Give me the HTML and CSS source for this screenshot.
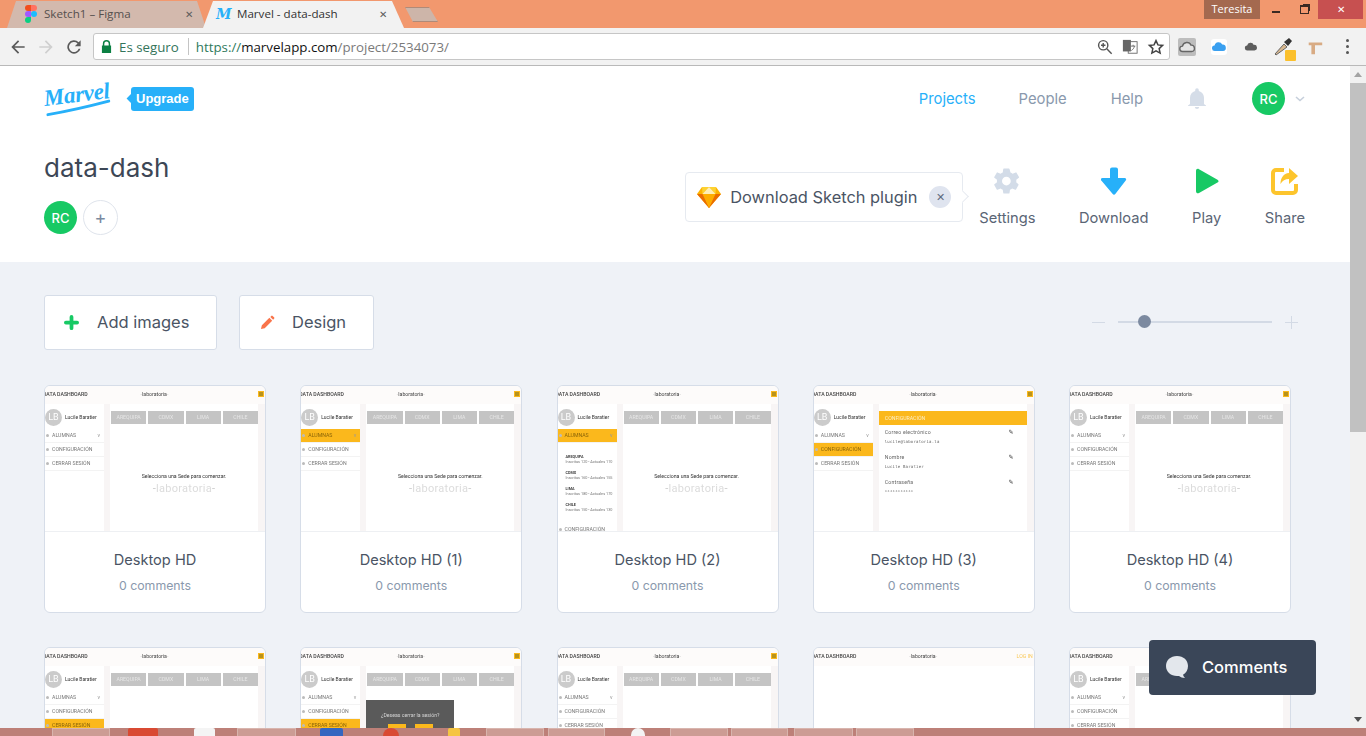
FILE: index.html
```html
<!DOCTYPE html>
<html lang="en">
<head>
  <meta charset="UTF-8">
  <meta name="viewport" content="width=device-width, initial-scale=1.0">
  <title>Marvel - data-dash</title>
  <link rel="stylesheet" href="styles.css">
</head>
<body>

<div class="tabstrip">
  <div class="tab tab-off">
    <svg class="favicon" viewBox="0 0 12 18" width="12" height="18">
      <circle cx="3" cy="3" r="3" fill="#f24e1e"/><rect x="3" width="3" height="6" fill="#f24e1e"/>
      <rect x="6" width="3" height="6" fill="#ff7262"/><circle cx="9" cy="3" r="3" fill="#ff7262"/>
      <circle cx="3" cy="9" r="3" fill="#a259ff"/><rect x="3" y="6" width="3" height="6" fill="#a259ff"/>
      <circle cx="9" cy="9" r="3" fill="#1abcfe"/>
      <circle cx="3" cy="15" r="3" fill="#0acf83"/><rect x="3" y="12" width="3" height="3" fill="#0acf83"/>
    </svg>
    <span class="tab-title">Sketch1 – Figma</span>
    <span class="tab-x">✕</span>
  </div>
  <div class="tab tab-on">
    <span class="favicon-m">M</span>
    <span class="tab-title">Marvel - data-dash</span>
    <span class="tab-x">✕</span>
  </div>
  <div class="newtab"></div>
  <div class="winctl">
    <span class="win-user">Teresita</span>
    <span class="win-btn"><i class="win-min"></i></span>
    <span class="win-btn"><i class="win-max"></i></span>
    <span class="win-close">✕</span>
  </div>
</div>

<div class="toolbar">
  <button class="tb-btn">
    <svg viewBox="0 0 24 24" width="20" height="20"><path d="M20 11H7.8l5.6-5.6L12 4l-8 8 8 8 1.4-1.4L7.8 13H20z" fill="#5a5a5a"/></svg>
  </button>
  <button class="tb-btn">
    <svg viewBox="0 0 24 24" width="20" height="20"><path d="M4 11h12.2l-5.6-5.6L12 4l8 8-8 8-1.4-1.4 5.6-5.6H4z" fill="#cfcfcf"/></svg>
  </button>
  <button class="tb-btn">
    <svg viewBox="0 0 24 24" width="20" height="20"><path d="M17.65 6.35A8 8 0 1 0 19.73 14h-2.08a6 6 0 1 1-1.41-6.24L13 11h7V4z" fill="#5a5a5a"/></svg>
  </button>
  <div class="omnibox">
    <svg class="lock" viewBox="0 0 12 14" width="11" height="13"><path d="M2 6V4a4 4 0 0 1 8 0v2h1v8H1V6zm1.6 0h4.8V4a2.4 2.4 0 0 0-4.8 0z" fill="#0b8043"/></svg>
    <span class="secure">Es seguro</span>
    <span class="omni-sep"></span>
    <span class="url"><span class="url-scheme">https://</span><span class="url-host">marvelapp.com</span>/project/2534073/</span>
    <span class="omni-icons">
      <svg viewBox="0 0 18 18" width="16" height="16"><circle cx="7" cy="7" r="5.2" fill="none" stroke="#555" stroke-width="1.6"/><path d="M11 11l5.5 5.5M4.5 7h5M7 4.500v5" stroke="#555" stroke-width="1.6"/></svg>
      <svg viewBox="0 0 18 18" width="16" height="16"><rect x="7" y="3" width="10" height="13" fill="#fff" stroke="#666"/><rect x="1" y="1" width="9" height="13" fill="#666"/><path d="M10 8h5M12.500 6.500v1.500M14 8c-.5 2.500-2 4-3.500 5" fill="none" stroke="#666"/></svg>
      <svg viewBox="0 0 24 24" width="18" height="18"><path d="M12 3.500l2.600 5.700 6.200.7-4.600 4.200 1.300 6.100L12 17.200l-5.500 3 1.300-6.100-4.600-4.200 6.200-.7z" fill="none" stroke="#444" stroke-width="2"/></svg>
    </span>
  </div>
  <div class="extensions">
    <span class="ext ext-weather">
      <svg viewBox="0 0 20 20" width="18" height="18"><path d="M5 15a3 3 0 0 1 0-6 5 5 0 0 1 9.500-1 3.500 3.500 0 0 1 .5 7z" fill="#e4e4e4" stroke="#666" stroke-width="1.500"/></svg>
    </span>
    <span class="ext ext-icloud">
      <svg viewBox="0 0 20 20" width="16" height="16"><path d="M5 15a3.500 3.500 0 0 1-.5-7A5 5 0 0 1 14 7a4 4 0 0 1 1 8z" fill="#3aa0f0"/></svg>
    </span>
    <span class="ext">
      <svg viewBox="0 0 20 20" width="14" height="14"><path d="M5 15a3.500 3.500 0 0 1-.5-7A5 5 0 0 1 14 7a4 4 0 0 1 1 8z" fill="#5d5d5d"/></svg>
    </span>
    <span class="ext ext-dropper">
      <svg viewBox="0 0 20 20" width="20" height="20"><path d="M3 18l-1-1 9-10 3 3z" fill="#d9b88f" stroke="#666"/><path d="M11 5l5-4 3 3-4 5z" fill="#333"/></svg>
      <i class="ext-badge"></i>
    </span>
    <span class="ext">
      <svg viewBox="0 0 20 20" width="18" height="18"><path d="M3 5h15v3h-8v10H6V8H3z" fill="#d8ab84"/></svg>
    </span>
    <span class="ext ext-dots"><i></i><i></i><i></i></span>
  </div>
</div>

<div class="app">
  <div class="page">
    <header class="topbar">
      <nav class="nav">
        <div class="brand">
          <span class="logo">Marvel
            <svg class="logo-swoosh" viewBox="0 0 66 10" width="66" height="10"><path d="M2 8c20-1 40-3 62-6" fill="none" stroke="#27b0f9" stroke-width="3" stroke-linecap="round"/></svg>
          </span>
          <span class="upgrade">Upgrade</span>
        </div>
        <div class="nav-links">
          <a class="nav-link nav-active">Projects</a>
          <a class="nav-link">People</a>
          <a class="nav-link nav-last">Help</a>
          <svg class="bell" viewBox="0 0 24 24" width="24" height="24"><path d="M12 22a2.200 2.200 0 0 0 2.200-2H9.800a2.200 2.200 0 0 0 2.200 2zm7-5v-6c0-3.500-2-6.200-5.200-7V3a1.800 1.800 0 0 0-3.600 0v1C7 4.800 5 7.500 5 11v6l-2 1.500V19h18v-.5z" fill="#d5dde8"/></svg>
          <span class="avatar">RC</span>
          <svg class="chevron" viewBox="0 0 10 6" width="10" height="6"><path d="M1 1l4 3.500L9 1" fill="none" stroke="#c6cfdb" stroke-width="1.600"/></svg>
        </div>
      </nav>
      <div class="project">
        <div class="project-info">
          <h1 class="project-name">data-dash</h1>
          <div class="members">
            <span class="avatar avatar-sm">RC</span>
            <span class="add-member">+</span>
          </div>
        </div>
        <div class="project-tools">
          <div class="sketch-pop">
            <svg viewBox="0 0 24 22" width="24" height="22">
              <path d="M5 1h14l5 7-12 14L0 8z" fill="#fdb300"/>
              <path d="M0 8h24L12 22z" fill="#ea6c00"/>
              <path d="M5.500 8h13L12 22z" fill="#fdad00"/>
              <path d="M5 1l.5 7L12 1l6.500 7L19 1z" fill="#fdd231"/>
              <path d="M5.500 8L12 1l6.500 7z" fill="#feeeb7"/>
            </svg>
            <span class="sketch-text">Download Sketch plugin</span>
            <span class="sketch-close">✕</span>
          </div>
          <div class="actions">
            <div class="action">
              <svg viewBox="0 0 24 24" width="30" height="30"><path d="M19.400 13a7.500 7.500 0 0 0 0-2l2.100-1.600a.5.5 0 0 0 .1-.6l-2-3.500a.5.5 0 0 0-.6-.2l-2.500 1a7.500 7.500 0 0 0-1.700-1L14 2.400a.5.5 0 0 0-.5-.4h-4a.5.5 0 0 0-.5.4l-.4 2.700a7.500 7.500 0 0 0-1.700 1l-2.500-1a.5.5 0 0 0-.6.2l-2 3.500a.5.5 0 0 0 .1.600L4 11a7.500 7.500 0 0 0 0 2l-2.100 1.600a.5.5 0 0 0-.1.600l2 3.500a.5.5 0 0 0 .6.200l2.500-1a7.500 7.500 0 0 0 1.700 1l.4 2.700a.5.5 0 0 0 .5.4h4a.5.5 0 0 0 .5-.4l.4-2.700a7.500 7.500 0 0 0 1.700-1l2.500 1a.5.5 0 0 0 .6-.2l2-3.500a.5.5 0 0 0-.1-.6zM11.500 15.500a3.500 3.500 0 1 1 0-7 3.500 3.500 0 0 1 0 7z" fill="#d3dce8"/></svg>
              <span>Settings</span>
            </div>
            <div class="action">
              <svg viewBox="0 0 26 28" width="26" height="28"><path d="M9 2.500a2 2 0 0 1 2-2h4a2 2 0 0 1 2 2V11h6.500c1.500 0 2.200 1.500 1.200 2.600L14.500 26.800a2 2 0 0 1-3 0L.3 13.600C-.7 12.500 0 11 1.500 11H9z" fill="#27b0f9"/></svg>
              <span>Download</span>
            </div>
            <div class="action">
              <svg viewBox="0 0 24 26" width="24" height="26"><path d="M1 3c0-2 1.500-2.800 3-1.800l18.500 10.500c1.400.8 1.400 2 0 2.800L4 25c-1.500.8-3 0-3-2z" fill="#17c964"/></svg>
              <span>Play</span>
            </div>
            <div class="action">
              <svg viewBox="0 0 28 28" width="28" height="28"><path d="M13 3H5a3 3 0 0 0-3 3v17a3 3 0 0 0 3 3h17a3 3 0 0 0 3-3v-6" fill="none" stroke="#fdc52d" stroke-width="4"/><path d="M18 1l9 8-9 8v-5c-4 0-6.500 1.500-8.500 5 0-6 3-10.500 8.500-11z" fill="#fdc52d"/></svg>
              <span>Share</span>
            </div>
          </div>
        </div>
      </div>
    </header>

    <section class="content">
      <div class="content-bar">
        <div class="content-btns">
          <button class="big-btn btn-add">
            <svg viewBox="0 0 16 16" width="15" height="15"><path d="M6 2a2 2 0 0 1 4 0v4h4a2 2 0 0 1 0 4h-4v4a2 2 0 0 1-4 0v-4H2a2 2 0 0 1 0-4h4z" fill="#17c964"/></svg>
            Add images
          </button>
          <button class="big-btn btn-design">
            <svg viewBox="0 0 16 16" width="15" height="15"><path d="M1 15l1-4 8-8 3 3-8 8zM11 2l1-1a1 1 0 0 1 1.500 0l1.500 1.500a1 1 0 0 1 0 1.500l-1 1z" fill="#f9744b"/></svg>
            Design
          </button>
        </div>
        <div class="zoom-slider">
          <i class="zoom-minus"></i>
          <div class="zoom-track"><i class="zoom-knob"></i></div>
          <i class="zoom-plus"></i>
        </div>
      </div>

      <div class="grid">

        <article class="card">
          <div class="shot">
            <div class="shot-head"><span>DATA DASHBOARD</span><b>laboratoria</b><i></i></div>
            <div class="shot-body">
              <div class="shot-side">
                <div class="shot-user"><span class="shot-lb">LB</span><span>Lucile Baratier</span></div>
                <div class="shot-item shot-drop">ALUMNAS</div>
                <div class="shot-item">CONFIGURACIÓN</div>
                <div class="shot-item">CERRAR SESIÓN</div>
              </div>
              <div class="shot-main">
                <div class="shot-tabs"><span>AREQUIPA</span><span>CDMX</span><span>LIMA</span><span>CHILE</span></div>
                <p class="shot-msg">Selecciona una Sede para comenzar.</p>
                <p class="shot-brand">laboratoria</p>
              </div>
            </div>
          </div>
          <div class="card-foot"><h3>Desktop HD</h3><p>0 comments</p></div>
        </article>

        <article class="card">
          <div class="shot">
            <div class="shot-head"><span>DATA DASHBOARD</span><b>laboratoria</b><i></i></div>
            <div class="shot-body">
              <div class="shot-side">
                <div class="shot-user"><span class="shot-lb">LB</span><span>Lucile Baratier</span></div>
                <div class="shot-item shot-drop shot-hot">ALUMNAS</div>
                <div class="shot-item">CONFIGURACIÓN</div>
                <div class="shot-item">CERRAR SESIÓN</div>
              </div>
              <div class="shot-main">
                <div class="shot-tabs"><span>AREQUIPA</span><span>CDMX</span><span>LIMA</span><span>CHILE</span></div>
                <p class="shot-msg">Selecciona una Sede para comenzar.</p>
                <p class="shot-brand">laboratoria</p>
              </div>
            </div>
          </div>
          <div class="card-foot"><h3>Desktop HD (1)</h3><p>0 comments</p></div>
        </article>

        <article class="card">
          <div class="shot">
            <div class="shot-head"><span>DATA DASHBOARD</span><b>laboratoria</b><i></i></div>
            <div class="shot-body">
              <div class="shot-side">
                <div class="shot-user"><span class="shot-lb">LB</span><span>Lucile Baratier</span></div>
                <div class="shot-item shot-drop shot-hot">ALUMNAS</div>
                <div class="shot-sedes">
                  <div><b>AREQUIPA</b>Inscritas 120 - Actuales 110</div>
                  <div><b>CDMX</b>Inscritas 160 - Actuales 155</div>
                  <div><b>LIMA</b>Inscritas 180 - Actuales 170</div>
                  <div><b>CHILE</b>Inscritas 150 - Actuales 130</div>
                </div>
                <div class="shot-item">CONFIGURACIÓN</div>
              </div>
              <div class="shot-main">
                <div class="shot-tabs"><span>AREQUIPA</span><span>CDMX</span><span>LIMA</span><span>CHILE</span></div>
                <p class="shot-msg">Selecciona una Sede para comenzar.</p>
                <p class="shot-brand">laboratoria</p>
              </div>
            </div>
          </div>
          <div class="card-foot"><h3>Desktop HD (2)</h3><p>0 comments</p></div>
        </article>

        <article class="card">
          <div class="shot">
            <div class="shot-head"><span>DATA DASHBOARD</span><b>laboratoria</b><i></i></div>
            <div class="shot-body">
              <div class="shot-side">
                <div class="shot-user"><span class="shot-lb">LB</span><span>Lucile Baratier</span></div>
                <div class="shot-item shot-drop">ALUMNAS</div>
                <div class="shot-item shot-hot">CONFIGURACIÓN</div>
                <div class="shot-item">CERRAR SESIÓN</div>
              </div>
              <div class="shot-main">
                <div class="shot-conf-title">CONFIGURACIÓN</div>
                <div class="shot-field"><span>Correo electrónico</span><code>lucile@laboratoria.la</code></div>
                <div class="shot-field"><span>Nombre</span><code>Lucile Baratier</code></div>
                <div class="shot-field"><span>Contraseña</span><code>***********</code></div>
              </div>
            </div>
          </div>
          <div class="card-foot"><h3>Desktop HD (3)</h3><p>0 comments</p></div>
        </article>

        <article class="card">
          <div class="shot">
            <div class="shot-head"><span>DATA DASHBOARD</span><b>laboratoria</b><i></i></div>
            <div class="shot-body">
              <div class="shot-side">
                <div class="shot-user"><span class="shot-lb">LB</span><span>Lucile Baratier</span></div>
                <div class="shot-item shot-drop">ALUMNAS</div>
                <div class="shot-item">CONFIGURACIÓN</div>
                <div class="shot-item">CERRAR SESIÓN</div>
              </div>
              <div class="shot-main">
                <div class="shot-tabs"><span>AREQUIPA</span><span>CDMX</span><span>LIMA</span><span>CHILE</span></div>
                <p class="shot-msg">Selecciona una Sede para comenzar.</p>
                <p class="shot-brand">laboratoria</p>
              </div>
            </div>
          </div>
          <div class="card-foot"><h3>Desktop HD (4)</h3><p>0 comments</p></div>
        </article>

        <article class="card">
          <div class="shot">
            <div class="shot-head"><span>DATA DASHBOARD</span><b>laboratoria</b><i></i></div>
            <div class="shot-body">
              <div class="shot-side">
                <div class="shot-user"><span class="shot-lb">LB</span><span>Lucile Baratier</span></div>
                <div class="shot-item shot-drop">ALUMNAS</div>
                <div class="shot-item">CONFIGURACIÓN</div>
                <div class="shot-item shot-hot">CERRAR SESIÓN</div>
              </div>
              <div class="shot-main">
                <div class="shot-tabs"><span>AREQUIPA</span><span>CDMX</span><span>LIMA</span><span>CHILE</span></div>
              </div>
            </div>
          </div>
          <div class="card-foot"><h3>Desktop HD (5)</h3><p>0 comments</p></div>
        </article>

        <article class="card">
          <div class="shot">
            <div class="shot-head"><span>DATA DASHBOARD</span><b>laboratoria</b><i></i></div>
            <div class="shot-body">
              <div class="shot-side">
                <div class="shot-user"><span class="shot-lb">LB</span><span>Lucile Baratier</span></div>
                <div class="shot-item shot-drop">ALUMNAS</div>
                <div class="shot-item">CONFIGURACIÓN</div>
                <div class="shot-item shot-hot">CERRAR SESIÓN</div>
              </div>
              <div class="shot-main">
                <div class="shot-tabs"><span>AREQUIPA</span><span>CDMX</span><span>LIMA</span><span>CHILE</span></div>
                <div class="shot-dialog">
                  ¿Deseas cerrar la sesión?
                  <div class="shot-dialog-btns"><i></i><i></i></div>
                </div>
              </div>
            </div>
          </div>
          <div class="card-foot"><h3>Desktop HD (6)</h3><p>0 comments</p></div>
        </article>

        <article class="card">
          <div class="shot">
            <div class="shot-head"><span>DATA DASHBOARD</span><b>laboratoria</b><i></i></div>
            <div class="shot-body">
              <div class="shot-side">
                <div class="shot-user"><span class="shot-lb">LB</span><span>Lucile Baratier</span></div>
                <div class="shot-item shot-drop">ALUMNAS</div>
                <div class="shot-item">CONFIGURACIÓN</div>
                <div class="shot-item">CERRAR SESIÓN</div>
              </div>
              <div class="shot-main">
                <div class="shot-tabs"><span>AREQUIPA</span><span>CDMX</span><span>LIMA</span><span>CHILE</span></div>
              </div>
            </div>
          </div>
          <div class="card-foot"><h3>Desktop HD (7)</h3><p>0 comments</p></div>
        </article>

        <article class="card">
          <div class="shot shot-blank">
            <div class="shot-head"><span>DATA DASHBOARD</span><b>laboratoria</b><em>LOG IN</em></div>
          </div>
          <div class="card-foot"><h3>Desktop HD (8)</h3><p>0 comments</p></div>
        </article>

        <article class="card">
          <div class="shot">
            <div class="shot-head"><span>DATA DASHBOARD</span><b>laboratoria</b><i></i></div>
            <div class="shot-body">
              <div class="shot-side">
                <div class="shot-user"><span class="shot-lb">LB</span><span>Lucile Baratier</span></div>
                <div class="shot-item shot-drop">ALUMNAS</div>
                <div class="shot-item">CONFIGURACIÓN</div>
                <div class="shot-item">CERRAR SESIÓN</div>
              </div>
              <div class="shot-main">
                <div class="shot-tabs"><span>AREQUIPA</span><span>CDMX</span><span>LIMA</span><span>CHILE</span></div>
              </div>
            </div>
          </div>
          <div class="card-foot"><h3>Desktop HD (9)</h3><p>0 comments</p></div>
        </article>

      </div>
    </section>
  </div>

  <div class="scrollbar">
    <span class="sb-up"></span>
    <span class="sb-thumb"></span>
    <span class="sb-down"></span>
  </div>

  <button class="comments-fab">
    <svg viewBox="0 0 24 24" width="24" height="24"><path d="M12 1c6.500 0 11 4.300 11 10 0 4-2 7-5 8.800.3 1.200 1 2.200 2 3.200-2.500 0-4.500-.8-6-2-.7.100-1.300.1-2 0C6 21 1 17 1 11 1 5.300 5.500 1 12 1z" fill="#e3e7ec"/></svg>
    Comments
  </button>
</div>

<div class="taskbar">
  <span class="task task-a"></span>
  <span class="mark mark-red mark-b"></span>
  <span class="mark mark-white mark-c"></span>
  <span class="task task-d"></span>
  <span class="mark mark-blue mark-e"></span>
  <span class="mark mark-red mark-f"></span>
  <span class="mark mark-gold mark-g"></span>
  <span class="task task-h"></span>
  <span class="task task-i"></span>
  <span class="mark mark-white mark-j"></span>
  <span class="task task-k"></span>
  <span class="task task-l"></span>
  <span class="task task-m"></span>
  <span class="task task-n"></span>
</div>

</body>
</html>
```

FILE: styles.css
```css
* {
  box-sizing: border-box;
}

html, body {
  margin: 0;
  height: 100%;
}

body {
  display: flex;
  flex-direction: column;
  height: 736px;
  overflow: hidden;
  font-family: Inter, "Liberation Sans", sans-serif;
  background: #fff;
}

button {
  font-family: inherit;
  padding: 0;
  border: 0;
  background: none;
}

/* browser tab strip */
.tabstrip {
  display: flex;
  flex: 0 0 28px;
  align-items: flex-end;
  padding-left: 7px;
  background: #f2986e;
  font-family: "Open Sans", sans-serif;
  font-size: 11.600px;
}

.tab {
  display: flex;
  align-items: center;
  width: 199px;
  height: 27px;
  padding: 0 13px 2px 18px;
  clip-path: polygon(0 100%, 9px 0, 190px 0, 199px 100%);
}

.tab-off {
  background: #d3b9ad;
  color: #55504d;
}

.tab-on {
  margin-left: -3px;
  width: 201px;
  padding-left: 13px;
  padding-right: 17px;
  background: #f2f2f2;
  color: #333;
  clip-path: polygon(0 100%, 10px 0, 189px 0, 201px 100%);
}

.favicon {
  flex: none;
  margin-right: 7px;
}

.favicon-m {
  width: 17px;
  margin-right: 4px;
  color: #27b0f9;
  font-family: "DejaVu Serif", serif;
  font-size: 14px;
  font-style: italic;
  font-weight: 700;
}

.tab-title {
  flex: 1;
}

.tab-x {
  color: #5c5c5c;
  font-size: 10px;
}

.newtab {
  width: 33px;
  height: 15px;
  margin: 0 0 6px 1px;
  background: #cdb5a9;
  border: 1px solid #b08a78;
  clip-path: polygon(0 0, 24px 0, 33px 100%, 8px 100%);
}

.winctl {
  display: flex;
  align-self: flex-start;
  align-items: center;
  height: 19px;
  margin-left: auto;
  padding-right: 3px;
}

.win-user {
  width: 56px;
  height: 19px;
  margin-right: 2px;
  background: #a4694f;
  color: #fff;
  font-size: 11px;
  line-height: 18px;
  text-align: center;
}

.win-btn {
  display: flex;
  align-items: center;
  justify-content: center;
  width: 28px;
  height: 19px;
}

.win-min {
  width: 8px;
  height: 2px;
  margin-top: 4px;
  background: #3a2a22;
}

.win-max {
  width: 9px;
  height: 9px;
  border: 1px solid #3a2a22;
  border-top-width: 2px;
  box-shadow: 2px -2px 0 -1px #3a2a22;
}

.win-close {
  width: 45px;
  height: 19px;
  background: #c75050;
  color: #fff;
  font-size: 10px;
  line-height: 19px;
  text-align: center;
}

/* browser toolbar */
.toolbar {
  display: flex;
  flex: 0 0 38px;
  align-items: center;
  padding-left: 4px;
  background: #f2f2f2;
  border-bottom: 1px solid #b9b9b9;
}

.tb-btn {
  display: flex;
  align-items: center;
  justify-content: center;
  width: 28px;
  height: 28px;
}

.omnibox {
  display: flex;
  align-items: center;
  width: 1077px;
  height: 27px;
  margin-left: 5px;
  padding: 0 4px 0 7px;
  background: #fff;
  border: 1px solid #c6c6c6;
  border-radius: 3px;
  font-family: "Open Sans", sans-serif;
  font-size: 13.300px;
}

.lock {
  margin: 0 7px 0 0;
}

.secure {
  color: #33745a;
}

.omni-sep {
  width: 1px;
  height: 17px;
  margin: 0 7px 0 9px;
  background: #c4c4c4;
}

.url {
  flex: 1;
  color: #7a7a7a;
}

.url-scheme {
  color: #2f7a5c;
}

.url-host {
  color: #111;
}

.omni-icons {
  display: flex;
  align-items: center;
  gap: 9px;
}

.extensions {
  display: flex;
  gap: 8px;
  margin-left: 5px;
}

.ext {
  position: relative;
  display: flex;
  align-items: center;
  justify-content: center;
  width: 24px;
  height: 24px;
}

.ext-weather svg {
  background: #bdbdbd;
  border-radius: 2px;
}

.ext-icloud svg {
  background: #fff;
  border-radius: 3px;
}

.ext-badge {
  position: absolute;
  right: -1px;
  bottom: -2px;
  width: 11px;
  height: 11px;
  background: #fbc02d;
  border-radius: 1px;
}

.ext-dots {
  flex-direction: column;
  gap: 3px;
}

.ext-dots i {
  width: 3px;
  height: 3px;
  background: #555;
  border-radius: 50%;
}

/* app area */
.app {
  position: relative;
  display: flex;
  flex: 1;
  min-height: 0;
}

.page {
  flex: 1;
  min-width: 0;
  overflow: hidden;
  background: #eff2f7;
}

.topbar {
  height: 196px;
  padding: 0 45px 0 44px;
  background: #fff;
}

.nav {
  display: flex;
  align-items: center;
  justify-content: space-between;
  height: 65px;
}

.brand {
  display: flex;
  align-items: center;
}

.logo {
  position: relative;
  display: block;
  width: 87px;
  color: #27b0f9;
  font-family: "Liberation Serif", serif;
  font-size: 23px;
  font-style: italic;
  font-weight: 700;
  letter-spacing: -.3px;
  line-height: 24px;
  transform: rotate(-7deg);
  transform-origin: 0 50%;
}

.logo-swoosh {
  position: absolute;
  top: 20px;
  left: 0;
}

.upgrade {
  position: relative;
  height: 24px;
  padding: 0 5px;
  background: #27b0f9;
  border-radius: 3px;
  color: #fff;
  font-family: "Liberation Sans", sans-serif;
  font-size: 13px;
  font-weight: 700;
  line-height: 24px;
}

.upgrade::before {
  content: "";
  position: absolute;
  top: 8px;
  left: -3px;
  width: 7px;
  height: 7px;
  background: #27b0f9;
  transform: rotate(45deg);
}

.nav-links {
  display: flex;
  align-items: center;
  font-size: 14.800px;
}

.nav-link {
  margin-right: 44px;
  color: #8a99ad;
}

.nav-active {
  margin-right: 43px;
  color: #27b0f9;
}

.nav-last {
  margin-right: 42px;
}

.bell {
  margin: 0 43px 0 0;
}

.avatar {
  display: flex;
  align-items: center;
  justify-content: center;
  width: 33px;
  height: 33px;
  background: #17c964;
  border-radius: 50%;
  color: #fff;
  font-size: 13px;
  font-weight: 500;
}

.chevron {
  margin-left: 10px;
}

.project {
  display: flex;
  justify-content: space-between;
}

.project-name {
  margin: 20px 0 15px;
  color: #3d4756;
  font-size: 26px;
  font-weight: 400;
  line-height: 34px;
}

.members {
  display: flex;
  align-items: center;
  gap: 6px;
}

.add-member {
  display: flex;
  align-items: center;
  justify-content: center;
  width: 35px;
  height: 35px;
  border: 1px solid #dfe4ec;
  border-radius: 50%;
  color: #7b8aa0;
  font-size: 18px;
}

.project-tools {
  display: flex;
  align-items: flex-start;
}

.sketch-pop {
  position: relative;
  display: flex;
  align-items: center;
  width: 278px;
  height: 50px;
  margin-top: 41px;
  margin-right: 16px;
  padding: 0 11px 0 11px;
  background: #fff;
  border: 1px solid #e6eaf0;
  border-radius: 4px;
}

.sketch-pop::after {
  content: "";
  position: absolute;
  top: 19px;
  right: -5px;
  width: 8px;
  height: 8px;
  background: #fff;
  border-top: 1px solid #e6eaf0;
  border-right: 1px solid #e6eaf0;
  transform: rotate(45deg);
}

.sketch-text {
  flex: 1;
  margin-left: 9px;
  color: #4a5464;
  font-size: 16.400px;
}

.sketch-close {
  display: flex;
  align-items: center;
  justify-content: center;
  width: 22px;
  height: 22px;
  background: #dfe4ef;
  border-radius: 50%;
  color: #5d6b80;
  font-size: 11px;
}

.actions {
  display: flex;
  gap: 43.500px;
  margin-top: 35px;
}

.action {
  display: flex;
  flex-direction: column;
  align-items: center;
  color: #5a6575;
  font-size: 14.700px;
}

.action svg {
  height: 30px;
  margin-bottom: 13px;
}

/* images */
.content {
  padding: 33px 0 0 44px;
}

.content-bar {
  display: flex;
  align-items: center;
  justify-content: space-between;
  height: 55px;
  padding-right: 52px;
}

.content-btns {
  display: flex;
  gap: 22px;
}

.big-btn {
  display: flex;
  align-items: center;
  height: 55px;
  padding-bottom: 1px;
  background: #fff;
  border: 1px solid #d6dde8;
  border-radius: 3px;
  color: #4a5464;
  font-size: 16.500px;
}

.btn-add {
  width: 173px;
  padding-left: 19px;
  gap: 18px;
}

.btn-design {
  width: 135px;
  padding-left: 20px;
  gap: 17px;
}

.zoom-slider {
  display: flex;
  align-items: center;
  gap: 13px;
  margin-top: -1px;
}

.zoom-minus {
  width: 13px;
  height: 1px;
  background: #d3dae5;
}

.zoom-plus {
  position: relative;
  width: 13px;
  height: 1px;
  background: #d3dae5;
}

.zoom-plus::after {
  content: "";
  position: absolute;
  top: -6px;
  left: 6px;
  width: 1px;
  height: 13px;
  background: #d3dae5;
}

.zoom-track {
  position: relative;
  width: 154px;
  height: 2px;
  background: #d3dae5;
}

.zoom-knob {
  position: absolute;
  top: -6px;
  left: 20px;
  width: 13px;
  height: 13px;
  background: #7c8aa0;
  border-radius: 50%;
}

.grid {
  display: grid;
  grid-template-columns: repeat(5, 222px);
  column-gap: 34.250px;
  row-gap: 34px;
  margin-top: 35px;
}

.card {
  height: 228px;
  overflow: hidden;
  background: #fff;
  border: 1px solid #d6dde8;
  border-radius: 6px;
}

.card-foot {
  padding-top: 18px;
  text-align: center;
}

.card-foot h3 {
  margin: 0;
  color: #4a5464;
  font-size: 14.600px;
  font-weight: 400;
  line-height: 20px;
}

.card-foot p {
  margin: 7px 0 0;
  color: #8a99ad;
  font-size: 12.300px;
  line-height: 18px;
}

/* screenshot miniature inside a card */
.shot {
  display: flex;
  flex-direction: column;
  height: 146px;
  overflow: hidden;
  background: #f8f5f5;
  border-bottom: 1px solid #eef0f3;
  color: #444;
  font-family: Roboto, sans-serif;
  font-size: 5.200px;
  filter: blur(.3px);
}

.shot-blank {
  background: #fff;
}

.shot-head {
  display: grid;
  flex: 0 0 18px;
  grid-template-columns: 1fr auto 1fr;
  align-items: center;
  padding: 0 1px 3px 0;
  background: #fdfbfa;
}

.shot-head span {
  margin-left: -2px;
  font-weight: 500;
}

.shot-head b {
  font-weight: 400;
}

.shot-head b::before,
.shot-head b::after,
.shot-brand::before,
.shot-brand::after {
  content: "-";
  color: #ccc;
}

.shot-head i {
  justify-self: end;
  width: 6px;
  height: 6px;
  margin-top: 1px;
  background: #b8931d;
  border: 1px solid #fbb81c;
}

.shot-head em {
  justify-self: end;
  color: #f9c95a;
  font-style: normal;
}

.shot-body {
  display: flex;
  flex: 1;
  min-height: 0;
}

.shot-side {
  flex: 0 0 59px;
  background: #fff;
  color: #777;
}

.shot-user {
  display: flex;
  align-items: center;
  gap: 3px;
  height: 25px;
  padding-top: 1px;
  color: #333;
  font-size: 5px;
}

.shot-lb {
  display: flex;
  align-items: center;
  justify-content: center;
  width: 17px;
  height: 17px;
  background: #cbcbcb;
  border-radius: 50%;
  color: #fff;
  font-size: 9px;
}

.shot-item {
  position: relative;
  height: 14px;
  padding-left: 7px;
  border-bottom: 1px solid #f3f3f3;
  line-height: 13px;
  white-space: nowrap;
}

.shot-item::before {
  content: "";
  position: absolute;
  top: 5px;
  left: 1px;
  width: 3px;
  height: 3px;
  background: #bbb;
  border-radius: 50%;
}

.shot-drop::after {
  content: "v";
  position: absolute;
  top: 0;
  right: 4px;
  color: #999;
}

.shot-hot {
  background: #fbb81c;
  color: #8a6408;
}

.shot-sedes {
  height: 80px;
  padding: 11px 0 0 8px;
  font-size: 3.800px;
  color: #777;
}

.shot-sedes div {
  height: 16px;
  white-space: nowrap;
}

.shot-sedes b {
  display: block;
  color: #444;
}

.shot-main {
  position: relative;
  flex: 1;
  height: 100%;
  margin: 0 7px 0 6px;
  padding-top: 7px;
  background: #fff;
  text-align: center;
}

.shot-tabs {
  display: grid;
  grid-template-columns: repeat(4, 1fr);
  gap: 2px;
  margin-left: 1px;
}

.shot-tabs span {
  height: 13px;
  background: #c4c4c4;
  color: #e6e6e6;
  line-height: 13px;
}

.shot-msg {
  margin: 49px 0 0;
  color: #333;
}

.shot-brand {
  margin: 3px 0 0;
  color: #dcdcdc;
  font-size: 11px;
  letter-spacing: .3px;
  line-height: 13px;
}

.shot-conf-title {
  height: 14px;
  padding-left: 6px;
  background: #fbb81c;
  color: #fdeec5;
  line-height: 14px;
  text-align: left;
}

.shot-field {
  position: relative;
  height: 25px;
  padding: 4px 0 0 6px;
  color: #666;
  text-align: left;
  letter-spacing: .2px;
}

.shot-field::after {
  content: "✎";
  position: absolute;
  top: 3px;
  right: 13px;
  color: #444;
  font-family: "DejaVu Sans", sans-serif;
  font-size: 6px;
}

.shot-field code {
  display: block;
  margin-top: 4px;
  font-family: "DejaVu Sans Mono", monospace;
  font-size: 4px;
}

.shot-dialog {
  position: absolute;
  top: 34px;
  left: 0;
  width: 88px;
  height: 60px;
  padding-top: 12px;
  background: #5a5a5a;
  color: #d4d4d4;
}

.shot-dialog-btns {
  display: flex;
  justify-content: center;
  gap: 9px;
  margin-top: 6px;
}

.shot-dialog-btns i {
  width: 18px;
  height: 8px;
  background: #fbb81c;
}

/* scrollbar */
.scrollbar {
  display: flex;
  flex: 0 0 16px;
  flex-direction: column;
  align-items: center;
  background: #f1f1f1;
}

.sb-up {
  margin: 6px 0 6px;
  border: 4px solid transparent;
  border-top: 0;
  border-bottom: 5px solid #a3a3a3;
}

.sb-thumb {
  width: 100%;
  height: 349px;
  background: #c1c1c1;
}

.sb-down {
  margin-top: auto;
  margin-bottom: 6px;
  border: 4px solid transparent;
  border-bottom: 0;
  border-top: 5px solid #505050;
}

.comments-fab {
  position: absolute;
  right: 50px;
  bottom: 33px;
  display: flex;
  align-items: center;
  gap: 13px;
  width: 167px;
  height: 55px;
  padding: 0 0 1px 16px;
  background: #3a4658;
  border-radius: 4px;
  color: #fff;
  font-size: 16.500px;
  font-weight: 500;
}

/* desktop taskbar, only its top edge shows */
.taskbar {
  display: flex;
  flex: 0 0 8px;
  background: #bd8078;
  overflow: hidden;
}

.task {
  height: 8px;
  background: #cc9c94;
  border: 1px solid #d8b5ae;
  border-bottom: 0;
}

.mark {
  border-radius: 2px 2px 0 0;
}

.mark-red {
  background: #d94a33;
}

.mark-white {
  background: #f4f4f4;
}

.mark-blue {
  background: #3466c0;
}

.mark-gold {
  background: #f5c542;
}

.task-a { width: 58px; margin-left: 52px; }
.mark-b { width: 30px; margin-left: 18px; }
.mark-c { width: 21px; margin-left: 36px; }
.task-d { width: 59px; margin-left: 22px; }
.mark-e { width: 23px; margin-left: 24px; }
.mark-f { width: 16px; margin-left: 40px; border-radius: 8px 8px 0 0; }
.mark-g { width: 12px; margin-left: 49px; }
.task-h { width: 58px; margin-left: 26px; }
.task-i { width: 57px; margin-left: 4px; }
.mark-j { width: 14px; margin-left: 26px; border-radius: 7px 7px 0 0; }
.task-k { width: 58px; margin-left: 25px; }
.task-l { width: 57px; margin-left: 3px; }
.task-m { width: 59px; margin-left: 6px; }
.task-n { width: 58px; margin-left: 3px; }
```
